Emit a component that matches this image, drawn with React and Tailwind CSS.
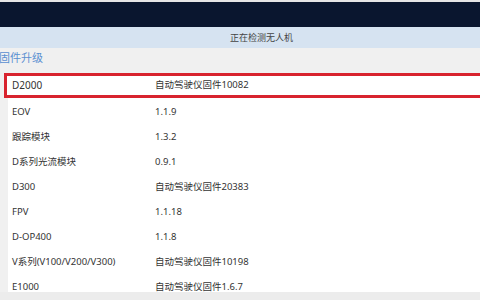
import React from "react";

const rows = [
  ["EOV", "1.1.9"],
  ["跟踪模块", "1.3.2"],
  ["D系列光流模块", "0.9.1"],
  ["D300", "自动驾驶仪固件20383"],
  ["FPV", "1.1.18"],
  ["D-OP400", "1.1.8"],
  ["V系列(V100/V200/V300)", "自动驾驶仪固件10198"],
  ["E1000", "自动驾驶仪固件1.6.7"],
];

const font = { fontFamily: '"Noto Sans", "Noto Sans CJK SC", sans-serif' };

export default function App() {
  return (
    <div
      className="w-[480px] h-[300px] overflow-hidden flex flex-col bg-[#f0f0f0] text-[#333333]"
      style={font}
    >
      <div className="h-[2px] bg-[#e6e6e6] shrink-0" />
      <div className="h-[25px] bg-[#0a162f] shrink-0" />
      <div className="h-[21px] bg-[#d6e3f1] shrink-0 text-[9px] leading-[21px] pl-[230px] text-[#444]">
        正在检测无人机
      </div>
      <div className="h-[25px] shrink-0 pt-[3px] text-[11px] leading-[14px] text-[#5a8fd0] -ml-[1px]">
        固件升级
      </div>
      <div className="h-[25px] shrink-0 ml-[4px] -mr-[10px] border-[3px] border-[#d8232e] bg-white flex items-center text-[9.5px]">
        <span className="w-[148px] pl-[5px] text-[10px]">D2000</span>
        <span>自动驾驶仪固件10082</span>
      </div>
      <div className="flex-1 flex flex-col ml-[8px] bg-white overflow-hidden min-h-0">
        <div className="h-[2px] shrink-0" />
        {rows.map(([a, b]) => (
          <div key={a} className="h-[25px] shrink-0 flex items-center text-[9.5px]">
            <span className="w-[147px] pl-[4px]">{a}</span>
            <span>{b}</span>
          </div>
        ))}
      </div>
      <div className="h-[8px] bg-[#ececec] shrink-0" />
    </div>
  );
}
